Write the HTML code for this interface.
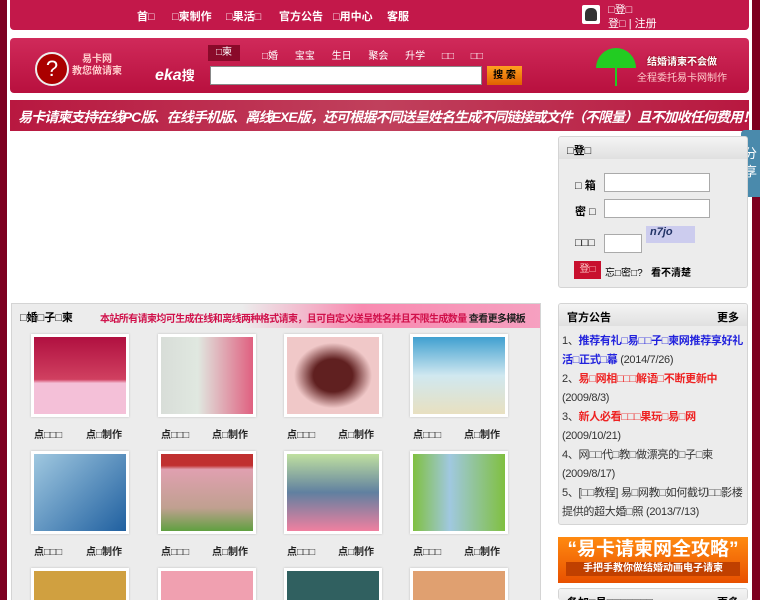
<!DOCTYPE html>
<html><head><meta charset="utf-8"><style>
*{margin:0;padding:0;box-sizing:border-box}
html{width:760px;height:600px;overflow:hidden}
body{width:760px;height:600px;overflow:hidden;background:#7d0020;font-family:"Liberation Sans","Noto Sans CJK SC",sans-serif;font-size:12px;position:relative}
.abs{position:absolute}
.wrap{left:7px;top:0;width:745px;height:600px;background:#fff}
.nav{left:10px;top:0;width:739px;height:30px;background:#c3184a;border-radius:0 0 4px 4px;color:#fff;font-size:11px;font-weight:bold}
.nav span{position:absolute;top:8px}
.hdr{left:10px;top:38px;width:739px;height:55px;background:linear-gradient(#d02a5a,#b8103e);border-radius:4px}
.ban{left:10px;top:100px;width:739px;height:31px;overflow:hidden;background:linear-gradient(90deg,#b81840,#c0405c 50%,#b81840);color:#fff;font-size:14px;font-style:italic;font-weight:bold;padding:7px 0 0 8px;white-space:nowrap;letter-spacing:-0.9px}
.panel{background:#ececec;border:1px solid #d4d4d4;border-radius:3px;overflow:hidden}
.ph{height:22px;background:linear-gradient(#f4f4f4,#e0e0e0);font-weight:bold;padding:5px 8px;font-size:11px}
.th{position:absolute;width:98px;height:83px;background:#fff;box-shadow:0 0 2px #bbb;padding:3px}
.th div{width:100%;height:100%}
.lb{position:absolute;font-size:10px;font-weight:bold;color:#222}
input{position:absolute;border:1px solid #aaa;background:#fff}
.n{font-size:11px;line-height:19px;color:#333;letter-spacing:-0.3px}
</style></head><body>
<div class="abs wrap"></div>
<div class="abs nav">
<span style="left:127px">首□</span><span style="left:162px">□柬制作</span><span style="left:216px">□果活□</span><span style="left:269px">官方公告</span><span style="left:323px">□用中心</span><span style="left:377px">客服</span>
<div class="abs" style="left:572px;top:5px;width:18px;height:19px;background:#fff;border-radius:2px"><div style="margin:3px;width:12px;height:13px;background:#333;border-radius:5px 5px 2px 2px"></div></div>
<span style="left:598px;top:1px;font-weight:normal">□登□</span><span style="left:598px;top:15px;font-weight:normal">登□ | 注册</span>
</div>
<div class="abs hdr">
<div class="abs" style="left:25px;top:14px;width:34px;height:34px;border-radius:50%;background:#a00;border:2px solid #eee;color:#fff;font-size:22px;text-align:center;line-height:30px">?</div>
<div class="abs" style="left:62px;top:16px;font-size:10px;line-height:12px;text-align:center;font-weight:bold;color:#fcc">易卡网<br>教您做请柬</div>
<div class="abs" style="left:198px;top:7px;width:32px;height:16px;background:#8a0a2a;color:#fff;font-size:10px;text-align:center;line-height:16px">□柬</div>
<div class="abs" style="left:252px;top:9px;color:#fff;font-size:10px;word-spacing:14px;white-space:nowrap">□婚 宝宝 生日 聚会 升学 □□ □□</div>
<div class="abs" style="left:145px;top:27px;color:#fff;font-size:16px;font-weight:bold;font-style:italic">eka<span style="font-style:normal;font-size:13px">搜</span></div>
<div class="abs" style="left:200px;top:28px;width:272px;height:19px;background:#fff;border:1px solid #888"></div>
<div class="abs" style="left:477px;top:28px;width:35px;height:19px;background:linear-gradient(#ffa020,#e06000);color:#000;font-size:10px;font-weight:bold;text-align:center;line-height:19px">搜 索</div>
<div class="abs" style="left:586px;top:10px;width:40px;height:20px;background:#2c2;border-radius:20px 20px 0 0"></div>
<div class="abs" style="left:605px;top:28px;width:2px;height:20px;background:#2c2"></div>
<div class="abs" style="left:637px;top:15px;color:#fff;font-size:10px;font-weight:bold;text-shadow:0 0 2px #700">结婚请柬不会做</div>
<div class="abs" style="left:627px;top:31px;color:#fcc;font-size:10px">全程委托易卡网制作</div>
</div>
<div class="abs ban">易卡请柬支持在线PC版、在线手机版、离线EXE版，还可根据不同送呈姓名生成不同链接或文件（不限量）且不加收任何费用！</div>
<div class="abs" style="left:741px;top:130px;width:19px;height:67px;background:#4a8aac;border-radius:4px 0 0 4px;color:#fff;font-size:13px;text-align:center;padding-top:15px;line-height:18px">分<br>享</div>

<div class="abs panel" style="left:558px;top:136px;width:190px;height:152px">
<div class="ph">□登□</div>
<span class="abs" style="left:16px;top:40px;font-weight:bold;font-size:11px">□ 箱</span>
<span class="abs" style="left:16px;top:66px;font-weight:bold;font-size:11px">密 □</span>
<span class="abs" style="left:16px;top:100px;font-weight:bold;font-size:11px">□□□</span>
<input style="left:45px;top:36px;width:106px;height:19px"><input style="left:45px;top:62px;width:106px;height:19px"><input style="left:45px;top:97px;width:38px;height:19px">
<div class="abs" style="left:87px;top:89px;width:49px;height:17px;background:#cce;color:#236;font-style:italic;font-weight:bold;font-size:11px;padding-left:4px">n7jo</div>
<div class="abs" style="left:15px;top:124px;width:27px;height:18px;background:#c8102e;color:#fcc;font-size:10px;text-align:center;line-height:18px">登□</div>
<span class="abs" style="left:46px;top:127px;font-size:10px">忘□密□?&nbsp;&nbsp; <b>看不清楚</b></span>
</div>
<div class="abs panel" style="left:558px;top:303px;width:190px;height:222px">
<div class="ph">官方公告<span style="float:right">更多</span></div>
<div class="n" style="padding:6px 2px 0 3px">1、<b style="color:#22d">推荐有礼□易□□子□柬网推荐享好礼活□正式□幕</b> (2014/7/26)<br>2、<b style="color:#e22">易□网相□□□解语□不断更新中</b> (2009/8/3)<br>3、<b style="color:#e22">新人必看□□□果玩□易□网</b> (2009/10/21)<br>4、网□□代□教□做漂亮的□子□柬 (2009/8/17)<br>5、[□□教程] 易□网教□如何截切□□影楼提供的超大婚□照 (2013/7/13)</div>
</div>
<div class="abs" style="left:558px;top:537px;width:190px;height:46px;background:linear-gradient(#ff8a10,#e85000);color:#fff;font-weight:bold;text-align:center;font-size:19px;line-height:24px;padding-top:1px">“易卡请柬网全攻略”<div style="font-size:10px;line-height:14px;background:#c04000;margin:0 8px">手把手教你做结婚动画电子请柬</div></div>
<div class="abs panel" style="left:558px;top:588px;width:190px;height:12px;border-bottom:none"><div class="ph">备加□易□□□□□□□<span style="float:right">更多</span></div></div>

<div class="abs panel" style="left:11px;top:303px;width:530px;height:297px;border-radius:0;border-bottom:none">
<div class="abs" style="left:230px;top:0;width:299px;height:24px;background:linear-gradient(90deg,#ececec,#f88ab0 40%,#f6a0c0)"></div>
<span class="abs" style="left:8px;top:5px;font-weight:bold;font-size:11px">□婚□子□柬</span>
<span class="abs" style="left:88px;top:6px;font-weight:bold;font-size:10px;color:#d0104a;white-space:nowrap;letter-spacing:-0.6px">本站所有请柬均可生成在线和离线两种格式请柬，且可自定义送呈姓名并且不限生成数量 <span style="color:#222">查看更多模板</span></span>
<div class="th" style="left:19px;top:30px"><div style="background:linear-gradient(#b01040 0,#d04060 55%,#f4c0d8 60%)"></div></div>
<div class="th" style="left:146px;top:30px"><div style="background:linear-gradient(90deg,#d8ddd8,#e0e8e0 40%,#e06080)"></div></div>
<div class="th" style="left:272px;top:30px"><div style="background:radial-gradient(#602020 30%,#f0c8c8 60%)"></div></div>
<div class="th" style="left:398px;top:30px"><div style="background:linear-gradient(#40a0d0,#d0e8f0 50%,#e8e0c0)"></div></div>
<div class="th" style="left:19px;top:147px"><div style="background:linear-gradient(135deg,#a0c8e0,#2060a0)"></div></div>
<div class="th" style="left:146px;top:147px"><div style="background:linear-gradient(#c03030 15%,#e0a0b0 20%,#c0a090 70%,#60a040)"></div></div>
<div class="th" style="left:272px;top:147px"><div style="background:linear-gradient(#c0e0a0,#6080a0 50%,#f080a0)"></div></div>
<div class="th" style="left:398px;top:147px"><div style="background:linear-gradient(90deg,#80c040,#a0c8e0 40%,#80c040)"></div></div>
<div class="th" style="left:19px;top:264px"><div style="background:#d0a040"></div></div>
<div class="th" style="left:146px;top:264px"><div style="background:#f0a0b0"></div></div>
<div class="th" style="left:272px;top:264px"><div style="background:#306060"></div></div>
<div class="th" style="left:398px;top:264px"><div style="background:#e0a070"></div></div>
<span class="lb" style="left:22px;top:122px">点□□□</span><span class="lb" style="left:74px;top:122px">点□制作</span>
<span class="lb" style="left:149px;top:122px">点□□□</span><span class="lb" style="left:200px;top:122px">点□制作</span>
<span class="lb" style="left:275px;top:122px">点□□□</span><span class="lb" style="left:326px;top:122px">点□制作</span>
<span class="lb" style="left:401px;top:122px">点□□□</span><span class="lb" style="left:452px;top:122px">点□制作</span>
<span class="lb" style="left:22px;top:239px">点□□□</span><span class="lb" style="left:74px;top:239px">点□制作</span>
<span class="lb" style="left:149px;top:239px">点□□□</span><span class="lb" style="left:200px;top:239px">点□制作</span>
<span class="lb" style="left:275px;top:239px">点□□□</span><span class="lb" style="left:326px;top:239px">点□制作</span>
<span class="lb" style="left:401px;top:239px">点□□□</span><span class="lb" style="left:452px;top:239px">点□制作</span>
</div>
</body></html>
